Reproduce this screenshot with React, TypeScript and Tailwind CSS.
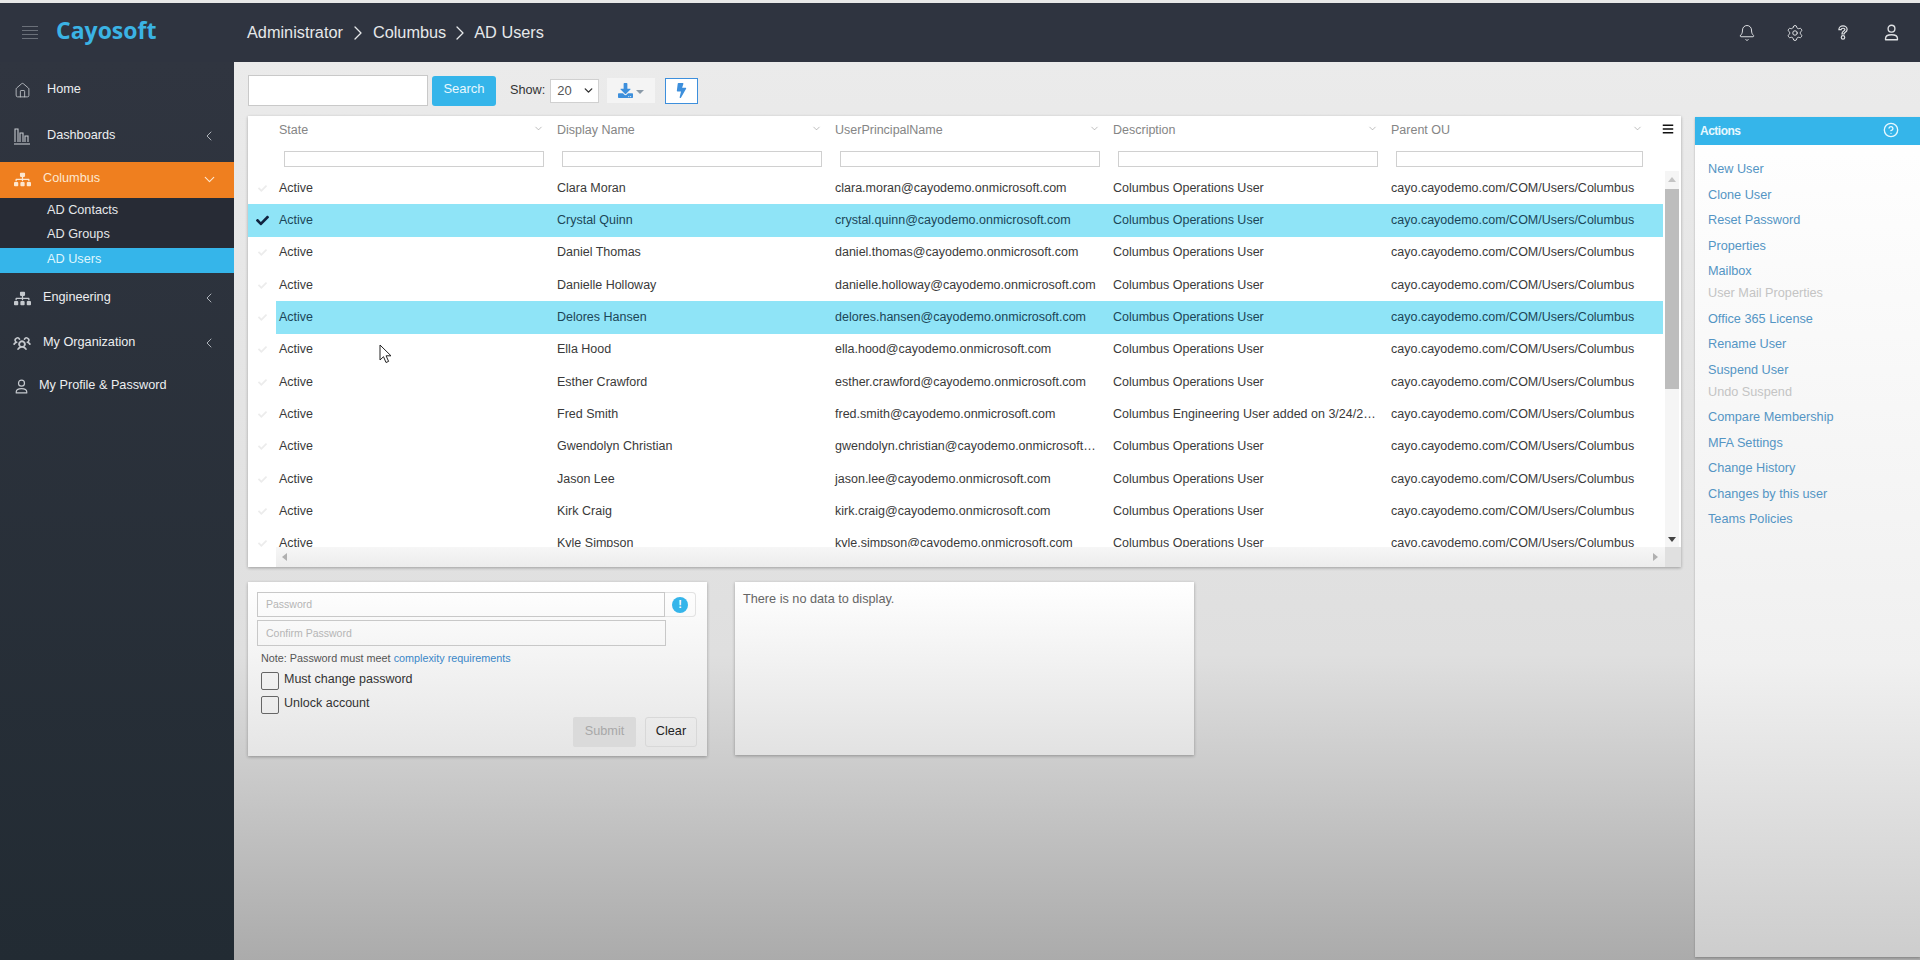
import { Bell, ChevronDown, ChevronLeft, ChevronRight, CircleHelp, House, Settings } from "lucide-react";
import { FaBolt, FaBars, FaCheck, FaDownload, FaSitemap } from "react-icons/fa";
import { PiUsersThreeBold } from "react-icons/pi";

type User = { name: string; upn: string; desc?: string; band?: "full" | "cols" };

const users: User[] = [
  { name: "Clara Moran", upn: "clara.moran@cayodemo.onmicrosoft.com" },
  { name: "Crystal Quinn", upn: "crystal.quinn@cayodemo.onmicrosoft.com", band: "full" },
  { name: "Daniel Thomas", upn: "daniel.thomas@cayodemo.onmicrosoft.com" },
  { name: "Danielle Holloway", upn: "danielle.holloway@cayodemo.onmicrosoft.com" },
  { name: "Delores Hansen", upn: "delores.hansen@cayodemo.onmicrosoft.com", band: "cols" },
  { name: "Ella Hood", upn: "ella.hood@cayodemo.onmicrosoft.com" },
  { name: "Esther Crawford", upn: "esther.crawford@cayodemo.onmicrosoft.com" },
  { name: "Fred Smith", upn: "fred.smith@cayodemo.onmicrosoft.com", desc: "Columbus Engineering User added on 3/24/2021 by Administrator" },
  { name: "Gwendolyn Christian", upn: "gwendolyn.christian@cayodemo.onmicrosoft.com" },
  { name: "Jason Lee", upn: "jason.lee@cayodemo.onmicrosoft.com" },
  { name: "Kirk Craig", upn: "kirk.craig@cayodemo.onmicrosoft.com" },
  { name: "Kyle Simpson", upn: "kyle.simpson@cayodemo.onmicrosoft.com" },
];

const actions = [
  { label: "New User" },
  { label: "Clone User" },
  { label: "Reset Password" },
  { label: "Properties" },
  { label: "Mailbox" },
  { label: "User Mail Properties", disabled: true },
  { label: "Office 365 License" },
  { label: "Rename User" },
  { label: "Suspend User" },
  { label: "Undo Suspend", disabled: true },
  { label: "Compare Membership" },
  { label: "MFA Settings" },
  { label: "Change History" },
  { label: "Changes by this user" },
  { label: "Teams Policies" },
];

const headers = ["State", "Display Name", "UserPrincipalName", "Description", "Parent OU"];

const BarsIcon = () => (
  <svg width="18" height="18" viewBox="0 0 18 18" fill="none" stroke="currentColor" strokeWidth="1.1">
    <path d="M1 17h16" />
    <path d="M2 15V2h3v13M7 15V6h3v9M12 15V9h3v6" />
  </svg>
);

const QuestionIcon = () => (
  <svg width="12" height="17" viewBox="0 0 16 20" fill="none" stroke="currentColor" strokeWidth="1.6">
    <path d="M2.5 6.2C2.5 3.2 5 1.2 8 1.2s5.5 2 5.5 4.8c0 2.200-1.400 3.200-2.800 4.100-.8.500-1.200 1-1.200 1.900H6.600c0-2 .9-3 2.300-3.900 1-.6 1.600-1.100 1.600-2.100 0-1-1-1.700-2.400-1.700S5.500 5 5.500 6.200z" />
    <circle cx="8" cy="16.500" r="2.300" />
  </svg>
);

const PersonIcon = ({ size, className }: { size: number; className?: string }) => (
  <svg width={size} height={size} viewBox="0 0 20 20" fill="none" stroke="currentColor" strokeWidth="1.6" className={className}>
    <circle cx="10" cy="5.500" r="4" />
    <path d="M3 18.500v-1.500c0-3 3-4.300 7-4.300s7 1.300 7 4.300v1.500z" strokeLinejoin="round" />
  </svg>
);

const SideItem = ({ icon, label, h, textLeft, chevron }: { icon: React.ReactNode; label: string; h: string; textLeft: string; chevron?: boolean }) => (
  <div className={`flex items-center pl-[13px] pr-[17px] text-[12.7px] text-[#eceef0] ${h}`}>
    <span className="flex w-[18px] shrink-0 justify-center text-[#c5c9ce]">{icon}</span>
    <span className={`flex-1 ${textLeft}`}>{label}</span>
    {chevron && <ChevronLeft size={16} strokeWidth={1.5} className="text-[#aeb3ba]" />}
  </div>
);

const Sidebar = () => (
  <aside className="w-[234px] shrink-0 bg-linear-to-b from-[#303540] to-[#222b33] pt-[5px]">
    <SideItem h="h-[46px]" textLeft="pl-[16px]" icon={<House size={17} strokeWidth={1.2} />} label="Home" />
    <SideItem h="h-[46px] mb-[3px]" textLeft="pl-[16px]" icon={<BarsIcon />} label="Dashboards" chevron />
    <div className="flex h-[36px] items-center bg-[#ef7f1f] pb-[2px] pl-[13px] pr-[16px] text-[12.7px] text-[#fde7cf]">
      <span className="flex w-[18px] shrink-0 justify-center"><FaSitemap size={17} /></span>
      <span className="flex-1 pl-[12px]">Columbus</span>
      <ChevronDown size={17} strokeWidth={1.6} />
    </div>
    <div className="bg-[#272b35] text-[12.7px] text-[#e4e6e9]">
      <div className="flex h-[25px] items-center pl-[47px]">AD Contacts</div>
      <div className="flex h-[25px] items-center pb-[1px] pl-[47px]">AD Groups</div>
      <div className="flex h-[25px] items-center bg-[#35b5ea] pb-[1px] pl-[47px] text-[#dff5fd]">AD Users</div>
    </div>
    <SideItem h="h-[47px] pt-[3px]" textLeft="pl-[12px]" icon={<FaSitemap size={17} />} label="Engineering" chevron />
    <SideItem h="h-[43px] pt-[2px]" textLeft="pl-[12px]" icon={<PiUsersThreeBold size={20} />} label="My Organization" chevron />
    <div className="flex h-[44px] items-center pl-[14px] pt-[2px] text-[12.7px] text-[#eceef0]">
      <PersonIcon size={15} className="text-[#c5c9ce]" />
      <span className="pl-[10px]">My Profile &amp; Password</span>
    </div>
  </aside>
);

const Header = () => (
  <header className="flex h-[59px] items-center bg-[#2f3440]">
    <div className="flex w-[247px] shrink-0 items-center pl-[22px]">
      <div className="flex w-[16px] flex-col gap-[3px]">
        <span className="h-px bg-[#6b7079]" />
        <span className="h-px bg-[#6b7079]" />
        <span className="h-px bg-[#6b7079]" />
        <span className="h-px bg-[#6b7079]" />
      </div>
      <span className="relative -top-[2px] pl-[18px] [font-family:'Open_Sans',sans-serif] text-[23px] font-bold text-[#3bb3e4]">Cayosoft</span>
    </div>
    <div className="flex items-center text-[16.3px] text-[#e6e8ea]">
      <span>Administrator</span>
      <ChevronRight size={24} strokeWidth={1.3} className="mx-[3px]" />
      <span>Columbus</span>
      <ChevronRight size={24} strokeWidth={1.3} className="mx-[2px]" />
      <span>AD Users</span>
    </div>
    <div className="ml-auto flex items-center pr-[5px] text-[#dfe1e4]">
      <span className="flex w-[48px] justify-center"><Bell size={18} strokeWidth={1.3} /></span>
      <span className="flex w-[48px] justify-center"><Settings size={18} strokeWidth={1.3} /></span>
      <span className="flex w-[48px] justify-center"><QuestionIcon /></span>
      <span className="flex w-[48px] justify-center"><PersonIcon size={17} /></span>
    </div>
  </header>
);

const Toolbar = () => (
  <div className="flex h-[31px] items-center">
    <input className="h-[31px] w-[180px] border border-[#c9c9c9] bg-white" />
    <button className="ml-[4px] flex h-[30px] w-[64px] items-center justify-center rounded-[3px] bg-[#35b5ea] pb-[3px] text-[13px] text-[#e8f8fe]">Search</button>
    <span className="ml-[14px] text-[12.7px] text-[#333]">Show:</span>
    <div className="ml-[5px] flex h-[24px] w-[49px] items-center justify-between border border-[#d0d0d0] bg-white pl-[6px] pr-[3px] text-[13px] text-[#555]">
      20
      <ChevronDown size={13} strokeWidth={2.6} className="text-[#333]" />
    </div>
    <div className="ml-[8px] flex h-[25px] w-[48px] items-center justify-center gap-[3px] bg-[#f4f4f4] text-[#3d8fdc]">
      <FaDownload size={15} />
      <span className="mt-[3px] h-0 w-0 border-x-[4px] border-t-[4px] border-x-transparent border-t-[#8a9aa8]" />
    </div>
    <div className="ml-[10px] flex h-[26px] w-[33px] items-center justify-center border border-[#3d8fdc] bg-white text-[#3d8fdc]">
      <FaBolt size={15} />
    </div>
  </div>
);

const colClass = ["w-[278px]", "w-[278px]", "w-[278px]", "w-[278px]", "w-[275px]"];

const Row = ({ user }: { user: User }) => {
  const cells = [
    "Active",
    user.name,
    user.upn,
    user.desc ?? "Columbus Operations User",
    "cayo.cayodemo.com/COM/Users/Columbus",
  ];
  const selected = Boolean(user.band);
  return (
    <div className={`flex h-[32.33px] items-center ${user.band === "full" ? "bg-[#8fe4f7]" : ""}`}>
      <div className="flex h-full w-[28px] shrink-0 items-center justify-center">
        {user.band === "full" ? <FaCheck size={13} className="text-[#11233f]" /> : <FaCheck size={9} className="text-[#ececec]" />}
      </div>
      <div className={`flex h-full items-center ${user.band === "cols" ? "bg-[#8fe4f7]" : ""}`}>
        {cells.map((cell, i) => (
          <div key={i} className={`${colClass[i]} truncate pl-[3px] pr-[11px] ${selected ? "text-[#1c4657]" : "text-[#3a3a3a]"}`}>
            {cell}
          </div>
        ))}
      </div>
    </div>
  );
};

const UsersTable = () => (
  <div className="mt-[10px] flex h-[451px] flex-col bg-white text-[12.5px] shadow-[0_1px_3px_rgba(0,0,0,0.3)]">
    <div className="flex h-[28px] items-center pl-[28px] pt-[1px]">
      {headers.map((h, i) => (
        <div key={h} className={`${colClass[i]} flex items-center justify-between pl-[3px] ${i === 4 ? "pr-[20px]" : "pr-[10px]"} text-[#858585]`}>
          {h}
          <ChevronDown size={11} strokeWidth={1.4} className="relative -top-[2px] text-[#9a9a9a]" />
        </div>
      ))}
      <FaBars size={12} className="relative -top-[2px] ml-[-1px] text-[#111]" />
    </div>
    <div className="flex h-[27px] pl-[28px] pt-[6px]">
      {headers.map((h, i) => (
        <div key={h} className={`${colClass[i]} pl-[8px] ${i === 4 ? "pr-[20px]" : "pr-[10px]"}`}>
          <input className="h-[16px] w-full border border-[#d0d0d0] bg-white" />
        </div>
      ))}
    </div>
    <div className="flex h-[376px]">
      <div className="w-[1415px] overflow-hidden pt-[1px]">
        {users.map((user) => <Row key={user.upn} user={user} />)}
      </div>
      <div className="ml-[2px] flex w-[14px] flex-col items-center bg-[#f5f5f5]">
        <span className="mt-[6px] h-0 w-0 border-x-[4px] border-b-[5px] border-x-transparent border-b-[#c4c4c4]" />
        <span className="mt-[7px] h-[200px] w-full bg-[#bdbdbd]" />
        <span className="mt-auto mb-[5px] h-0 w-0 border-x-[4px] border-t-[5px] border-x-transparent border-t-[#444]" />
      </div>
    </div>
    <div className="flex h-[20px] items-center">
      <div className="w-[28px]" />
      <div className="flex h-full flex-1 items-center justify-between bg-linear-to-b from-[#f6f6f6] to-[#ececec] px-[6px]">
        <span className="h-0 w-0 border-y-[4px] border-r-[5px] border-y-transparent border-r-[#b0b0b0]" />
        <span className="mr-[1px] h-0 w-0 border-y-[4px] border-l-[5px] border-y-transparent border-l-[#b0b0b0]" />
      </div>
      <div className="h-full w-[16px] bg-[#e0e0e0]" />
    </div>
  </div>
);

const PasswordCard = () => (
  <div className="relative h-[174px] w-[459px] bg-linear-to-b from-white to-[#e5e5e5] px-[9px] pt-[10px] shadow-[0_1px_3px_rgba(0,0,0,0.3)]">
    <div className="flex h-[25px]">
      <input placeholder="Password" className="h-full w-[408px] border border-[#c8c8c8] bg-transparent px-[8px] pb-[1px] text-[10.5px] placeholder:text-[#b5b5b5]" />
      <div className="flex h-full w-[31px] items-center justify-center rounded-r-[4px] border border-l-0 border-[#e2e2e2]">
        <span className="flex h-[16px] w-[16px] items-center justify-center rounded-full bg-[#35b5ea] text-[11px] font-bold text-white">!</span>
      </div>
    </div>
    <input placeholder="Confirm Password" className="mt-[3px] block h-[26px] w-[409px] border border-[#c8c8c8] bg-transparent px-[8px] text-[10.5px] placeholder:text-[#b5b5b5]" />
    <p className="mt-[4px] pl-[4px] text-[10.8px] text-[#555]">
      Note: Password must meet <span className="text-[#3a87c8]">complexity requirements</span>
    </p>
    <div className="mt-[6px] flex items-start pl-[4px] text-[12.5px] text-[#333]">
      <span className="h-[18px] w-[18px] rounded-[2px] border border-[#666]" />
      <span className="relative -top-[2px] pl-[5px]">Must change password</span>
    </div>
    <div className="mt-[5px] flex items-start pl-[4px] text-[12.5px] text-[#333]">
      <span className="h-[18px] w-[18px] rounded-[2px] border border-[#666]" />
      <span className="relative -top-[2px] pl-[5px]">Unlock account</span>
    </div>
    <div className="mt-[2px] flex justify-end gap-[9px] pr-[1px] text-[12.7px]">
      <button className="h-[30px] w-[63px] rounded-[2px] bg-[#dadada] text-[#a8a8a8]">Submit</button>
      <button className="h-[30px] w-[52px] rounded-[3px] border border-[#d8d8d8] text-[#222]">Clear</button>
    </div>
  </div>
);

const ActionsPanel = () => (
  <aside className="ml-[14px] mt-[42px] h-[840px] w-[225px] bg-linear-to-b from-white via-[#f0f0f0] via-[65%] to-[#cdcdcd] shadow-[0_1px_2px_rgba(0,0,0,0.25)]">
    <div className="flex h-[28px] items-center justify-between bg-[#35b5ea] pl-[5px] pr-[21px] text-[12px] font-bold tracking-[-0.5px] text-[#e8f8fe]">
      Actions
      <CircleHelp size={16} strokeWidth={2} className="relative -top-[1px]" />
    </div>
    <div className="pl-[13px] pt-[12px] text-[12.7px]">
      {actions.map((a) => (
        <div key={a.label} className={`flex h-[25.500px] items-center ${a.disabled ? "-mt-[3.500px] text-[#c4c4c4]" : "text-[#5495c4]"}`}>
          {a.label}
        </div>
      ))}
    </div>
  </aside>
);

const App = () => (
  <div className="relative h-[960px] w-[1920px] overflow-hidden bg-[#e8e8e8] pt-[3px] [font-family:'Liberation_Sans',Arial,sans-serif]">
    <Header />
    <div className="flex h-[898px]">
      <Sidebar />
      <main className="flex flex-1 bg-linear-to-b from-[#ebebeb] via-[#dfdfdf] via-[66%] to-[#ababab] pl-[14px] pt-[13px]">
        <div className="w-[1433px]">
          <Toolbar />
          <UsersTable />
          <div className="mt-[15px] flex gap-[28px]">
            <PasswordCard />
            <div className="h-[173px] w-[459px] bg-linear-to-b from-white to-[#e2e2e2] px-[8px] pt-[8px] text-[12.7px] text-[#666] shadow-[0_1px_3px_rgba(0,0,0,0.3)]">
              There is no data to display.
            </div>
          </div>
        </div>
        <ActionsPanel />
      </main>
    </div>
    {/* mouse pointer over the grid */}
    <svg className="absolute left-[379px] top-[344px]" width="14" height="20" viewBox="0 0 14 20">
      <path d="M1 1v15l3.500-3.300 2.500 5.800 2.600-1.100-2.500-5.600H12z" fill="#fff" stroke="#222" strokeWidth="1" />
    </svg>
  </div>
);

export default App;
